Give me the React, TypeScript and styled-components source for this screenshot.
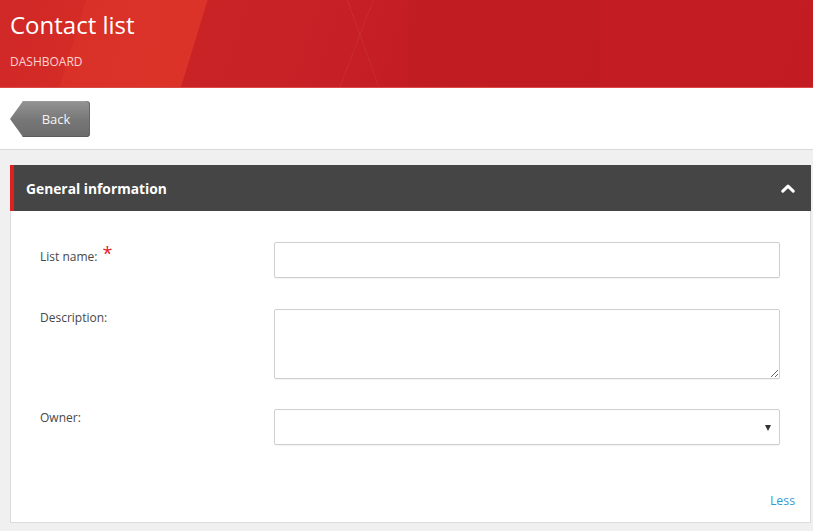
import React from "react";
import styled, { createGlobalStyle } from "styled-components";

const GlobalStyle = createGlobalStyle`
  html, body {
    margin: 0;
    padding: 0;
    background: #f0f0f0;
    font-family: "Open Sans", "Liberation Sans", Arial, sans-serif;
  }
  * { box-sizing: border-box; }
`;

const Page = styled.div`
  display: flex;
  flex-direction: column;
  min-height: 531px;
  background: #f0f0f0;
`;

/* Red banner with faceted diagonal shading */
const Banner = styled.header`
  height: 88px;
  padding: 8px 10px 0;
  display: flex;
  flex-direction: column;
  background-color: #c21b22;
  background-image:
    linear-gradient(70deg, transparent 0 356px, rgba(255, 255, 255, 0.05) 356px 357px, transparent 357px),
    linear-gradient(111deg, transparent 0 348px, rgba(255, 255, 255, 0.05) 348px 349px, transparent 349px),
    linear-gradient(90deg, transparent 0 408px, rgba(0, 0, 0, 0.02) 408px 600px, transparent 600px),
    linear-gradient(
      107deg,
      #d02827 0,
      #d42b27 82px,
      #d93028 83px,
      #dc3329 198px,
      #ca2326 199px,
      #c82126 290px,
      #c41d23 400px,
      #c21b22 100%
    );
  box-shadow: inset 0 -1px 0 #dd4a45;
`;

const Title = styled.h1`
  margin: 0;
  font-size: 24px;
  font-weight: 400;
  line-height: 33px;
  color: #ffffff;
`;

const Crumb = styled.div`
  margin-top: 12px;
  font-size: 12px;
  line-height: 17px;
  color: rgba(255, 235, 235, 0.88);
  text-transform: uppercase;
`;

const Toolbar = styled.div`
  height: 62px;
  padding: 13px 10px;
  background: #ffffff;
  border-bottom: 1px solid #d9d9d9;
  display: flex;
  align-items: flex-start;
`;

const BackButton = styled.button`
  width: 80px;
  height: 36px;
  padding: 0 0 0 12px;
  border: none;
  border-radius: 0 4px 4px 0;
  clip-path: polygon(13px 0, 100% 0, 100% 100%, 13px 100%, 0 50%);
  background: linear-gradient(#949494, #767676 55%, #6c6c6c);
  box-shadow: inset 0 -1px 0 #5c5c5c, inset -1px 0 0 #666, inset 0 1px 0 #9a9a9a;
  color: #f4f4f4;
  font-family: inherit;
  font-size: 13px;
  cursor: pointer;
`;

const Content = styled.main`
  padding: 15px 2px 8px 10px;
`;

const Panel = styled.section`
  display: flex;
  flex-direction: column;
`;

const PanelHead = styled.div`
  height: 46px;
  padding: 0 16px 0 12px;
  display: flex;
  align-items: center;
  justify-content: space-between;
  background: #454545;
  border-left: 4px solid #e0201f;
`;

const PanelTitle = styled.h2`
  margin: 0;
  font-size: 13.8px;
  font-weight: 700;
  color: #ffffff;
`;

const PanelBody = styled.div`
  background: #ffffff;
  border: 1px solid #dcdcdc;
  border-top: none;
  padding: 31px 30px 13px 29px;
  display: flex;
  flex-direction: column;
`;

const Form = styled.div`
  display: grid;
  grid-template-columns: 234px 1fr;
  row-gap: 31px;
`;

const Label = styled.label<{ $drop?: number }>`
  padding-top: ${(p) => p.$drop ?? 0}px;
  font-size: 12px;
  line-height: 18px;
  color: #474747;
`;

/* Red mark after a mandatory field's caption */
const Required = styled.span`
  display: inline-block;
  position: relative;
  top: -1px;
  margin-left: 5px;
  color: #e0201f;
  font-size: 18px;
  line-height: 12px;
`;

const fieldBase = `
  width: 100%;
  border: 1px solid #cfcfcf;
  border-radius: 2px;
  background: #ffffff;
  box-shadow: 0 1px 1px rgba(0, 0, 0, 0.05);
  font-family: inherit;
  font-size: 13px;
  color: #333;
  outline: none;
`;

const TextInput = styled.input`
  ${fieldBase}
  height: 36px;
  padding: 0 8px;
`;

const TextArea = styled.textarea`
  ${fieldBase}
  height: 70px;
  margin-bottom: -1px;
  padding: 6px 8px;
  display: block;
  resize: vertical;
`;

const SelectWrap = styled.div`
  position: relative;
  &::after {
    content: "";
    position: absolute;
    right: 9px;
    top: 16px;
    border-left: 3.5px solid transparent;
    border-right: 3.5px solid transparent;
    border-top: 6px solid #333;
    pointer-events: none;
  }
`;

const Select = styled.select`
  ${fieldBase}
  height: 36px;
  padding: 0 8px;
  appearance: none;
`;

const Footer = styled.div`
  margin-top: 47px;
  display: flex;
  justify-content: flex-end;
`;

const LessLink = styled.a`
  margin-right: -15px;
  font-size: 12.3px;
  line-height: 17px;
  color: #2f9bd2;
  text-decoration: none;
  cursor: pointer;
`;

const ChevronUp = () => (
  <svg width="14" height="9" viewBox="0 0 14 9" aria-hidden>
    <polyline
      points="1.8,7.2 7,2.2 12.2,7.2"
      fill="none"
      stroke="#ffffff"
      strokeWidth="3"
      strokeLinecap="round"
      strokeLinejoin="round"
    />
  </svg>
);

export default function App() {
  return (
    <Page>
      <GlobalStyle />
      <Banner>
        <Title>Contact list</Title>
        <Crumb>Dashboard</Crumb>
      </Banner>
      <Toolbar>
        <BackButton type="button">Back</BackButton>
      </Toolbar>
      <Content>
        <Panel>
          <PanelHead>
            <PanelTitle>General information</PanelTitle>
            <ChevronUp />
          </PanelHead>
          <PanelBody>
            <Form>
              <Label htmlFor="list-name" $drop={6}>
                List name:<Required>*</Required>
              </Label>
              <TextInput id="list-name" type="text" />
              <Label htmlFor="description">Description:</Label>
              <TextArea id="description" />
              <Label htmlFor="owner">Owner:</Label>
              <SelectWrap>
                <Select id="owner" defaultValue="">
                  <option value=""></option>
                </Select>
              </SelectWrap>
            </Form>
            <Footer>
              <LessLink>Less</LessLink>
            </Footer>
          </PanelBody>
        </Panel>
      </Content>
    </Page>
  );
}
